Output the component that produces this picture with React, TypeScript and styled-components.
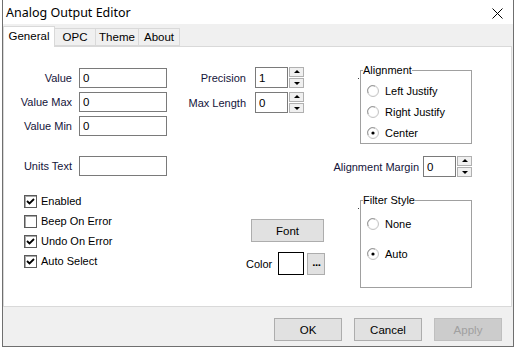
import React from 'react';
import styled, { createGlobalStyle } from 'styled-components';

const Global = createGlobalStyle`
  html, body { margin: 0; padding: 0; background: #ffffff; }
  body {
    font-family: "Liberation Sans", Arial, sans-serif;
    font-size: 11px;
    color: #000;
  }
  * { box-sizing: border-box; }
`;

const Window = styled.div`
  margin-left: 2px;
  width: 512px;
  height: 347px;
  border: 1px solid #6f6f6f;
  border-top: none;
  background: #f0f0f0;
  display: flex;
  flex-direction: column;
`;

const TitleBar = styled.div`
  height: 24px;
  background: #ffffff;
  display: flex;
  align-items: center;
  justify-content: space-between;
  padding: 0 10px 0 3px;
`;

const Title = styled.span`
  font-family: "Noto Sans", "Liberation Sans", sans-serif;
  font-size: 12.5px;
  color: #000;
`;

const CloseButton = styled.span`
  display: flex;
  width: 11px;
  height: 11px;
  margin-top: 2px;
`;

const TabStrip = styled.div`
  margin-top: 2px;
  height: 20px;
  display: flex;
  align-items: flex-end;
  position: relative;
  z-index: 1;
`;

const Tab = styled.div<{ $width: number; $active?: boolean }>`
  width: ${(p) => p.$width}px;
  height: ${(p) => (p.$active ? 21 : 18)}px;
  margin-bottom: ${(p) => (p.$active ? -1 : 0)}px;
  margin-left: -1px;
  &:first-child { margin-left: 0; }
  background: ${(p) => (p.$active ? '#ffffff' : '#f0f0f0')};
  border: 1px solid #d9d9d9;
  border-bottom: ${(p) => (p.$active ? 'none' : '1px solid #d9d9d9')};
  display: flex;
  align-items: center;
  justify-content: center;
  padding-bottom: ${(p) => (p.$active ? 2 : 0)}px;
  font-family: "Liberation Sans", Arial, sans-serif;
  font-size: 11.5px;
  color: #000;
`;

const Panel = styled.div`
  height: 261px;
  margin-right: 1px;
  background: #ffffff;
  border: 1px solid #d9d9d9;
  display: flex;
  align-items: flex-start;
`;

const LeftColumn = styled.div`
  margin-left: 13px;
  padding-top: 21px;
  width: 151px;
  display: flex;
  flex-direction: column;
`;

const MiddleColumn = styled.div`
  margin-left: 18px;
  padding-top: 20px;
  width: 138px;
  display: flex;
  flex-direction: column;
  align-items: flex-start;
`;

const RightColumn = styled.div`
  margin-left: 8px;
  width: 141px;
  display: flex;
  flex-direction: column;
  align-items: flex-start;
`;

const FieldStack = styled.div<{ $top?: number }>`
  display: flex;
  flex-direction: column;
  gap: 4px;
  margin-top: ${(p) => p.$top ?? 0}px;
`;

const FieldRow = styled.div<{ $height?: number }>`
  display: flex;
  align-items: center;
  height: ${(p) => p.$height ?? 20}px;
`;

const Label = styled.span<{ $width: number; $gap: number }>`
  width: ${(p) => p.$width}px;
  margin-right: ${(p) => p.$gap}px;
  text-align: right;
  white-space: nowrap;
  color: #14143a;
  font-size: 11px;
`;

const TextBox = styled.input<{ $width: number }>`
  width: ${(p) => p.$width}px;
  height: 100%;
  border: 1px solid #7a7a7a;
  background: #fff;
  padding: 0 3px;
  margin: 0;
  font-family: "Liberation Sans", Arial, sans-serif;
  font-size: 11.5px;
  color: #000;
  outline: none;
`;

const Spinner = styled.div`
  width: 15px;
  height: 100%;
  margin-left: 1px;
  display: flex;
  flex-direction: column;
  gap: 1px;
`;

const SpinButton = styled.div<{ $down?: boolean }>`
  flex: 1;
  background: #f0f0f0;
  border: 1px solid #b0b0b0;
  display: flex;
  align-items: center;
  justify-content: center;
  &::after {
    content: '';
    width: 0;
    height: 0;
    border-left: 3px solid transparent;
    border-right: 3px solid transparent;
    ${(p) =>
      p.$down
        ? 'border-top: 3px solid #000; margin-top: 1px;'
        : 'border-bottom: 3px solid #000; margin-bottom: 1px;'}
  }
`;

const CheckList = styled.div`
  margin-top: 15px;
  margin-left: 7px;
  display: flex;
  flex-direction: column;
`;

const CheckRow = styled.div`
  height: 20px;
  display: flex;
  align-items: center;
  gap: 4px;
  font-size: 11px;
`;

const CheckBox = styled.span`
  width: 13px;
  height: 13px;
  border: 1px solid #5a5a5a;
  box-shadow: inset 1px 1px 0 #a8a8a8;
  background: #fff;
  display: flex;
  align-items: center;
  justify-content: center;
`;

const PushButton = styled.button<{ $width: number; $height: number; $disabled?: boolean }>`
  width: ${(p) => p.$width}px;
  height: ${(p) => p.$height}px;
  margin: 0;
  padding: 0;
  background: ${(p) => (p.$disabled ? '#cccccc' : '#e1e1e1')};
  border: 1px solid ${(p) => (p.$disabled ? '#bfbfbf' : '#adadad')};
  color: ${(p) => (p.$disabled ? '#a0a0a0' : '#000')};
  font-family: "Liberation Sans", Arial, sans-serif;
  font-size: 11.5px;
  display: flex;
  align-items: center;
  justify-content: center;
`;

const FontButton = styled(PushButton)`
  margin-top: 106px;
  margin-left: 65px;
`;

const ColorRow = styled.div`
  margin-top: 10px;
  margin-left: 60px;
  height: 23px;
  display: flex;
  align-items: center;
`;

const ColorLabel = styled.span`
  font-size: 11px;
  margin-right: 6px;
`;

const Swatch = styled.span`
  width: 26px;
  height: 23px;
  background: #fff;
  border: 1px solid #000;
  margin-right: 3px;
`;

const DotsButton = styled(PushButton)`
  font-weight: bold;
  letter-spacing: -0.5px;
  padding-bottom: 4px;
`;

const Group = styled.fieldset<{ $top: number; $bottomPad: number }>`
  position: relative;
  margin: ${(p) => p.$top}px 0 0 28px;
  width: 112px;
  min-width: 0;
  border: 1px solid #a0a0a0;
  padding: 0 0 ${(p) => p.$bottomPad}px 0;
  &::before {
    content: '';
    position: absolute;
    left: -3px;
    top: 1px;
    width: 1px;
    height: 1px;
    background: #404040;
  }
`;

const Legend = styled.legend`
  margin-left: 2px;
  padding: 0;
  font-size: 11px;
  line-height: 13px;
  color: #000;
`;

const RadioList = styled.div<{ $gap: number; $top: number }>`
  display: flex;
  flex-direction: column;
  gap: ${(p) => p.$gap}px;
  padding: ${(p) => p.$top}px 0 0 6px;
`;

const RadioRow = styled.div`
  height: 21px;
  display: flex;
  align-items: center;
  gap: 6px;
  font-size: 11px;
`;

const MarginRow = styled(FieldRow)`
  margin-top: 12px;
`;

const ButtonBar = styled.div`
  margin-top: 11px;
  display: flex;
  justify-content: flex-end;
  gap: 12px;
  padding-right: 11px;
`;

const Radio = ({ checked }: { checked?: boolean }) => (
  <svg width="12" height="12" viewBox="0 0 12 12">
    <circle cx="6" cy="6" r="5.5" fill="#f6f6f6" stroke="#c4c4c4" />
    <path d="M1.2 8 A5 5 0 0 1 8 1.2" fill="none" stroke="#9a9a9a" strokeWidth="1" />
    <circle cx="6" cy="6" r="4.3" fill="#ffffff" />
    {checked && <circle cx="6" cy="6" r="1.6" fill="#000" />}
  </svg>
);

const Check = ({ checked }: { checked?: boolean }) => (
  <CheckBox>
    {checked && (
      <svg width="9" height="9" viewBox="0 0 9 9">
        <path d="M1 4 L3.5 6.5 L8 2" fill="none" stroke="#000" strokeWidth="1.8" />
      </svg>
    )}
  </CheckBox>
);

const Spin = () => (
  <Spinner>
    <SpinButton />
    <SpinButton $down />
  </Spinner>
);

export default function App() {
  return (
    <>
      <Global />
      <Window>
        <TitleBar>
          <Title>Analog Output Editor</Title>
          <CloseButton>
            <svg width="11" height="11" viewBox="0 0 11 11">
              <path d="M0.5 0.5 L10.5 10.5 M10.5 0.5 L0.5 10.5" stroke="#000" strokeWidth="1" />
            </svg>
          </CloseButton>
        </TitleBar>

        <TabStrip>
          <Tab $width={52} $active>General</Tab>
          <Tab $width={42}>OPC</Tab>
          <Tab $width={44}>Theme</Tab>
          <Tab $width={42}>About</Tab>
        </TabStrip>

        <Panel>
          <LeftColumn>
            <FieldStack>
              <FieldRow>
                <Label $width={55} $gap={7}>Value</Label>
                <TextBox $width={88} readOnly defaultValue="0" />
              </FieldRow>
              <FieldRow>
                <Label $width={55} $gap={7}>Value Max</Label>
                <TextBox $width={88} readOnly defaultValue="0" />
              </FieldRow>
              <FieldRow>
                <Label $width={55} $gap={7}>Value Min</Label>
                <TextBox $width={88} readOnly defaultValue="0" />
              </FieldRow>
            </FieldStack>
            <FieldStack $top={20}>
              <FieldRow>
                <Label $width={55} $gap={7}>Units Text</Label>
                <TextBox $width={88} readOnly defaultValue="" />
              </FieldRow>
            </FieldStack>
            <CheckList>
              <CheckRow><Check checked />Enabled</CheckRow>
              <CheckRow><Check />Beep On Error</CheckRow>
              <CheckRow><Check checked />Undo On Error</CheckRow>
              <CheckRow><Check checked />Auto Select</CheckRow>
            </CheckList>
          </LeftColumn>

          <MiddleColumn>
            <FieldStack>
              <FieldRow $height={21}>
                <Label $width={60} $gap={9}>Precision</Label>
                <TextBox $width={33} readOnly defaultValue="1" />
                <Spin />
              </FieldRow>
              <FieldRow $height={21}>
                <Label $width={60} $gap={9}>Max Length</Label>
                <TextBox $width={33} readOnly defaultValue="0" />
                <Spin />
              </FieldRow>
            </FieldStack>
            <FontButton $width={73} $height={23}>Font</FontButton>
            <ColorRow>
              <ColorLabel>Color</ColorLabel>
              <Swatch />
              <DotsButton $width={18} $height={22}>...</DotsButton>
            </ColorRow>
          </MiddleColumn>

          <RightColumn>
            <Group $top={17} $bottomPad={0}>
              <Legend>Alignment</Legend>
              <RadioList $gap={0} $top={3}>
                <RadioRow><Radio />Left Justify</RadioRow>
                <RadioRow><Radio />Right Justify</RadioRow>
                <RadioRow><Radio checked />Center</RadioRow>
              </RadioList>
            </Group>
            <MarginRow $height={21}>
              <Label $width={87} $gap={4}>Alignment Margin</Label>
              <TextBox $width={33} readOnly defaultValue="0" />
              <Spin />
            </MarginRow>
            <Group $top={17} $bottomPad={23}>
              <Legend>Filter Style</Legend>
              <RadioList $gap={9} $top={6}>
                <RadioRow><Radio />None</RadioRow>
                <RadioRow><Radio checked />Auto</RadioRow>
              </RadioList>
            </Group>
          </RightColumn>
        </Panel>

        <ButtonBar>
          <PushButton $width={68} $height={23}>OK</PushButton>
          <PushButton $width={68} $height={23}>Cancel</PushButton>
          <PushButton $width={68} $height={23} $disabled>Apply</PushButton>
        </ButtonBar>
      </Window>
    </>
  );
}
